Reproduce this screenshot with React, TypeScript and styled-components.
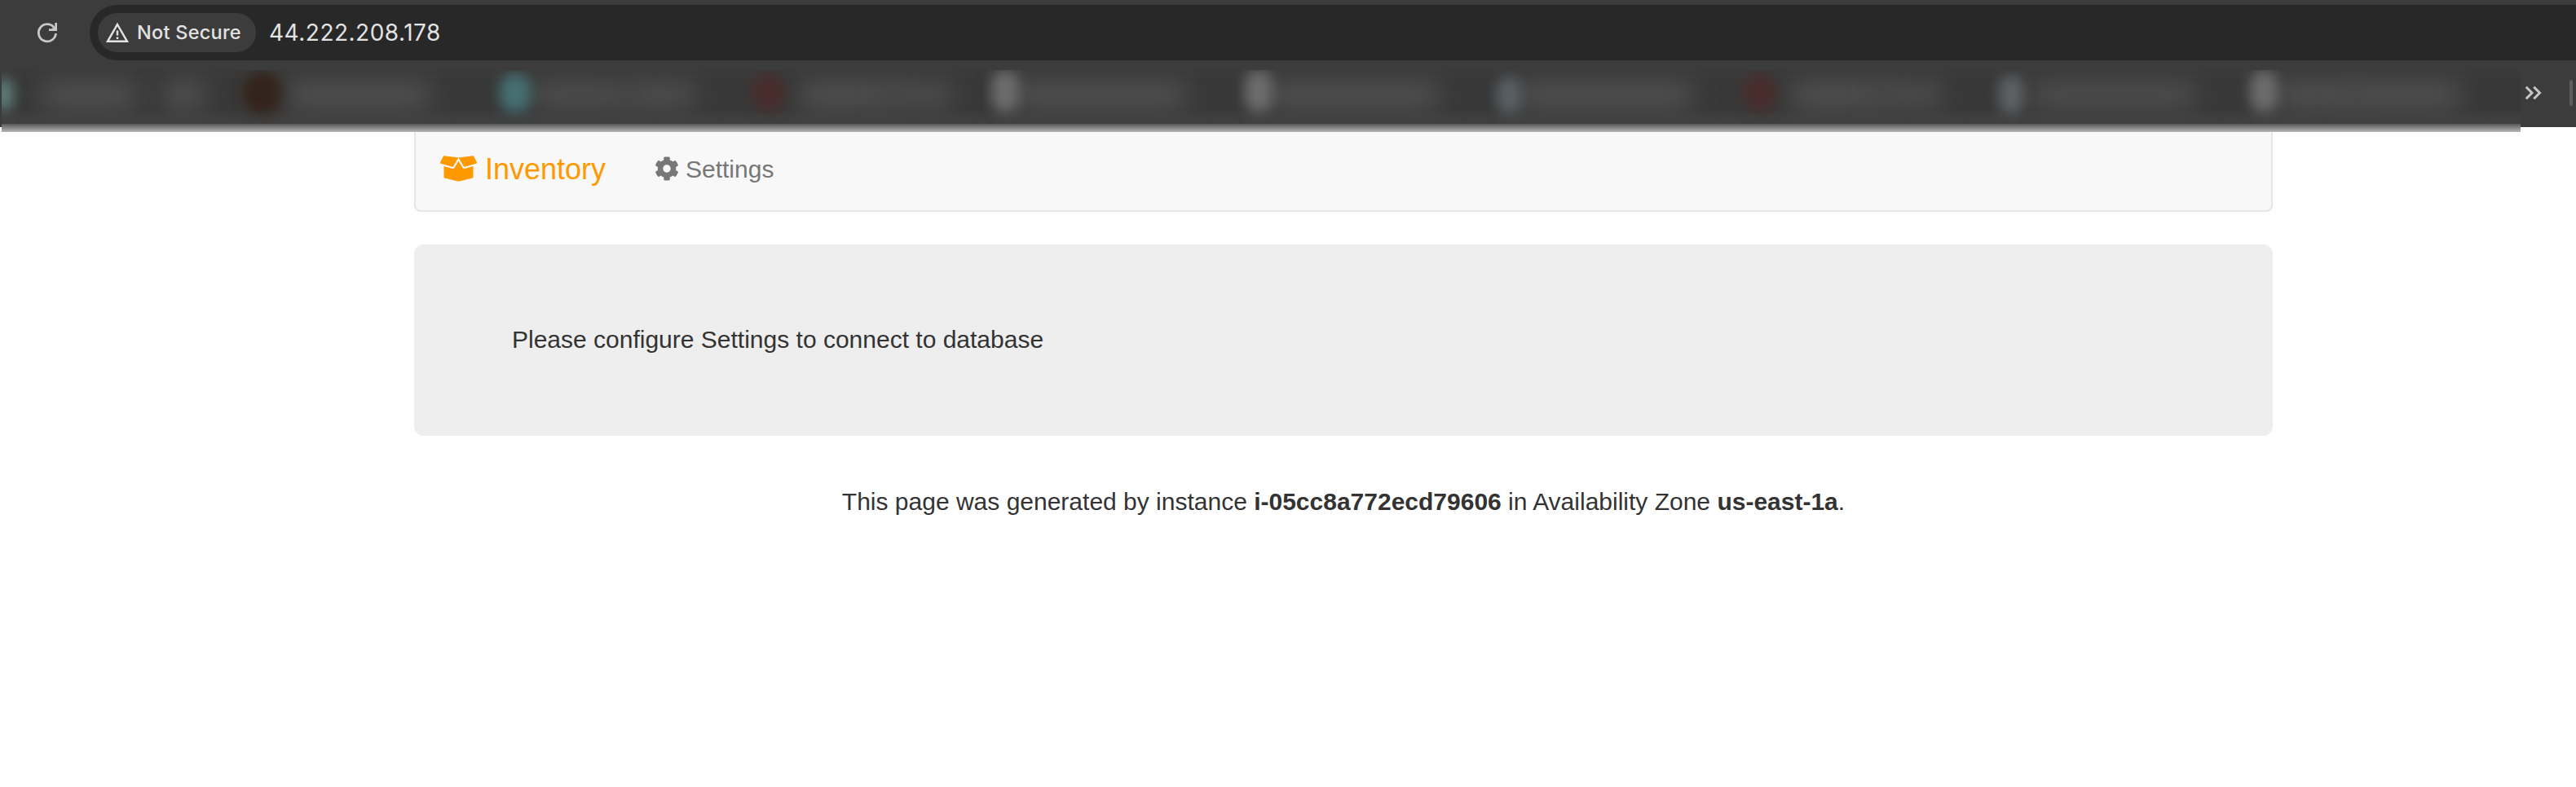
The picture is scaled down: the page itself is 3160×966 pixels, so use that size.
import React from "react";
import styled, { createGlobalStyle } from "styled-components";
import { FaBoxOpen, FaCog } from "react-icons/fa";

const Global = createGlobalStyle`
  *, *::before, *::after { box-sizing: border-box; }
  body {
    margin: 0;
    background: #fff;
    color: #333;
    font-family: "Liberation Sans", Arial, sans-serif;
    font-size: 30px;
    line-height: 42px;
  }
`;

const Page = styled.div`
  display: flex;
  flex-direction: column;
  height: 966px;
  overflow: hidden;
`;

const Chrome = styled.header`
  height: 156px;
  padding-top: 6px;
  background: #3c3c3c;
`;

const Toolbar = styled.div`
  display: flex;
  align-items: center;
  height: 68px;
  padding-left: 44px;
`;

const ReloadIcon = styled.svg`
  width: 28px;
  height: 28px;
  margin-right: 38px;
`;

const AddressBar = styled.div`
  display: flex;
  flex: 1;
  align-items: center;
  height: 68px;
  padding-left: 10px;
  border-radius: 34px 0 0 34px;
  background: #282828;
  color: #e3e3e3;
  font-family: Inter, "Liberation Sans", sans-serif;
`;

const SecurityChip = styled.div`
  display: flex;
  align-items: center;
  width: 194px;
  height: 48px;
  padding-left: 9px;
  border-radius: 24px;
  background: #3c3c3c;
  font-size: 23.5px;
  font-weight: 500;
  letter-spacing: 0.25px;
  white-space: nowrap;
`;

const WarningIcon = styled.svg`
  flex: none;
  width: 30px;
  height: 28px;
  margin-right: 9px;
`;

const Address = styled.span`
  margin-left: 16px;
  font-size: 28px;
  letter-spacing: 0.5px;
  white-space: nowrap;
`;

const Bookmarks = styled.div`
  display: flex;
  align-items: center;
  height: 76px;
  margin-top: 12px;
  padding-left: 2px;
`;

const BlurredStrip = styled.div`
  position: relative;
  z-index: 1;
  width: 3090px;
  height: 76px;
  overflow: hidden;
  background: linear-gradient(#3a3a3a 0 10px, #383838 10px 48px, #3e3e3e 56px, #404040 66px, #585858 66px, #b6b6b6 76px);
`;

const Smudges = styled.svg`
  display: block;
  width: 3090px;
  height: 66px;
`;

const OverflowIcon = styled.svg`
  width: 22px;
  height: 18px;
  margin: 0 33px 20px 5px;
`;

const Separator = styled.div`
  width: 4px;
  height: 32px;
  margin-bottom: 20px;
  border-radius: 2px;
  background: #5e5e5e;
`;

const Container = styled.main`
  width: 2280px;
  margin-left: 508px;
`;

const Navbar = styled.nav`
  display: flex;
  align-items: center;
  height: 104px;
  padding-left: 30px;
  border: 2px solid #e7e7e7;
  border-top: 0;
  border-radius: 0 0 8px 8px;
  background: #f8f8f8;
`;

const Brand = styled.a`
  display: flex;
  align-items: center;
  width: 263px;
  color: #ff9900;
  font-size: 36px;
  svg { width: 45px; height: 36px; margin-right: 10px; }
`;

const NavLink = styled.a`
  display: flex;
  align-items: center;
  color: #777;
  svg { width: 30px; height: 30px; margin-right: 8px; }
`;

const Label = styled.span`
  padding-top: 2px;
`;

const Jumbotron = styled.section`
  height: 235px;
  margin-top: 40px;
  padding: 96px 120px 0;
  border-radius: 12px;
  background: #eee;
`;

const Footer = styled.p`
  margin: 60px 0 0;
  text-align: center;
`;

type Smudge = { x: number; w: number; color: string; y?: number; h?: number };

const icons: Smudge[] = [
  { x: -8, w: 22, color: "#60807c" },
  { x: 297, w: 46, color: "#34231a", y: 2, h: 52 },
  { x: 611, w: 38, color: "#467074", y: 4, h: 48 },
  { x: 922, w: 38, color: "#4a2c2c", y: 4, h: 46 },
  { x: 1214, w: 34, color: "#6c6c6c", y: 0, h: 52 },
  { x: 1525, w: 34, color: "#6c6c6c", y: 0, h: 52 },
  { x: 1834, w: 30, color: "#5a6064", y: 8, h: 46 },
  { x: 2138, w: 38, color: "#4a2c2c", y: 4, h: 46 },
  { x: 2450, w: 30, color: "#5e6266", y: 6, h: 48 },
  { x: 2758, w: 34, color: "#6c6c6c", y: 0, h: 52 },
];

const titles: Smudge[] = [
  { x: 50, w: 115, color: "#4b4b4b" },
  { x: 200, w: 48, color: "#4c4c4c" },
  { x: 350, w: 175, color: "#4b4b4b" },
  { x: 650, w: 120, color: "#494949" },
  { x: 765, w: 85, color: "#494949" },
  { x: 980, w: 115, color: "#4b4b4b" },
  { x: 1085, w: 80, color: "#484848" },
  { x: 1240, w: 212, color: "#4b4b4b" },
  { x: 1550, w: 212, color: "#4b4b4b" },
  { x: 1860, w: 212, color: "#4b4b4b" },
  { x: 2195, w: 115, color: "#4b4b4b" },
  { x: 2300, w: 80, color: "#484848" },
  { x: 2490, w: 200, color: "#494949" },
  { x: 2790, w: 105, color: "#4b4b4b" },
  { x: 2880, w: 135, color: "#4b4b4b" },
];

export default function App() {
  return (
    <Page>
      <Global />
      <Chrome>
        <Toolbar>
          <ReloadIcon viewBox="0 0 28 28" fill="none" stroke="#c7c7c7" strokeWidth="2.9">
            <path d="M22.2 7.6A10.6 10.6 0 1 0 24.5 15" />
            <path d="M16 12H26V2h-2.7v4.8L19.5 9.3H16Z" fill="#c7c7c7" stroke="none" />
          </ReloadIcon>
          <AddressBar>
            <SecurityChip>
              <WarningIcon viewBox="0 0 30 28" fill="none" stroke="#e3e3e3" strokeWidth="2.4">
                <path d="M15 4 27 24.8H3Z" />
                <path d="M15 11.5v6M15 19.5v2.5" />
              </WarningIcon>
              Not Secure
            </SecurityChip>
            <Address>44.222.208.178</Address>
          </AddressBar>
        </Toolbar>
        <Bookmarks>
          <BlurredStrip>
            <Smudges viewBox="0 0 3090 66">
              <defs>
                <filter id="iconBlur" x="-100%" y="-60%" width="300%" height="220%" colorInterpolationFilters="sRGB">
                  <feGaussianBlur stdDeviation="8 8" />
                </filter>
                <filter id="titleBlur" x="-100%" y="-80%" width="300%" height="260%" colorInterpolationFilters="sRGB">
                  <feGaussianBlur stdDeviation="16 11" />
                </filter>
              </defs>
              {titles.map((s) => (
                <rect key={s.x} x={s.x} y={10} width={s.w} height={42} fill={s.color} filter="url(#titleBlur)" />
              ))}
              {icons.map(({ x, w, color, y = 10, h = 40 }) => (
                <rect
                  key={x}
                  x={x}
                  y={y}
                  width={w}
                  height={h}
                  rx={w / 2}
                  fill={color}
                  filter="url(#iconBlur)"
                />
              ))}
            </Smudges>
          </BlurredStrip>
          <OverflowIcon viewBox="0 0 22 18" fill="none" stroke="#c7c7c7" strokeWidth="3">
            <path d="m1.8 1.8 7.2 7.2-7.2 7.2M11.3 1.8l7.2 7.2-7.2 7.2" />
          </OverflowIcon>
          <Separator />
        </Bookmarks>
      </Chrome>
      <Container>
        <Navbar>
          <Brand>
            <FaBoxOpen />
            <Label>Inventory</Label>
          </Brand>
          <NavLink>
            <FaCog />
            <Label>Settings</Label>
          </NavLink>
        </Navbar>
        <Jumbotron>Please configure Settings to connect to database</Jumbotron>
        <Footer>
          This page was generated by instance <b>i-05cc8a772ecd79606</b> in Availability Zone <b>us-east-1a</b>.
        </Footer>
      </Container>
    </Page>
  );
}
